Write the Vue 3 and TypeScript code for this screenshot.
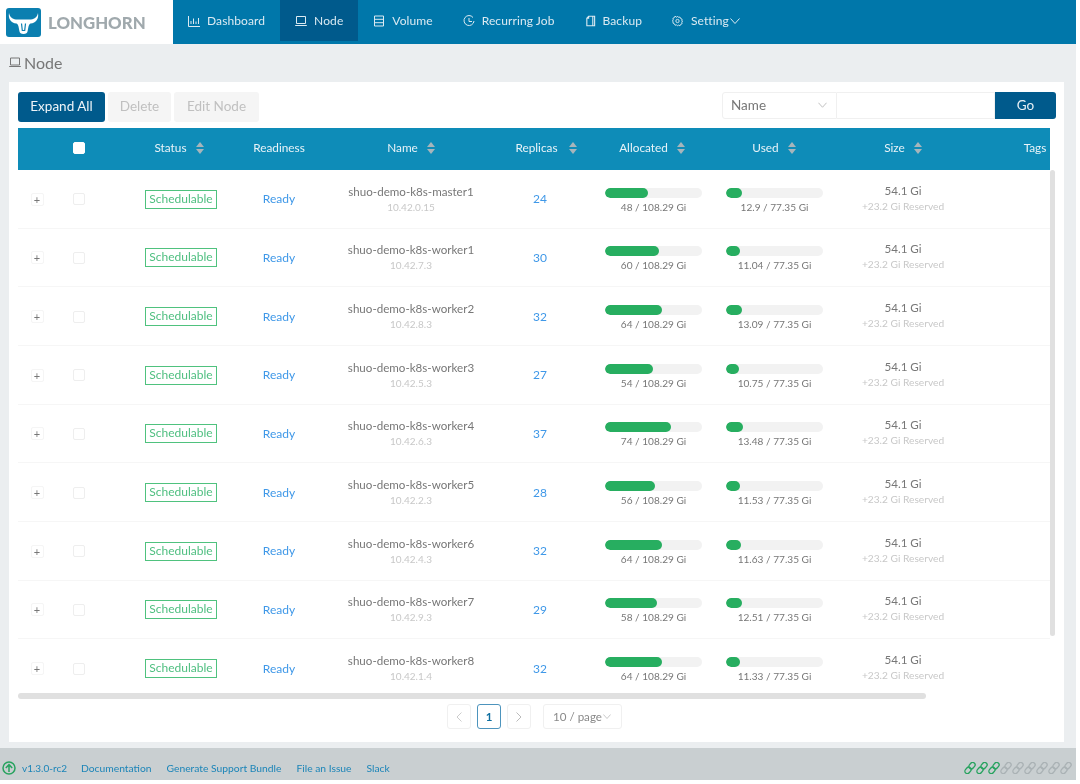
<script setup lang="ts">
interface NodeRow { name: string; ip: string; replicas: number; allocated: number; used: number }

const rows: NodeRow[] = [
  { name: 'shuo-demo-k8s-master1', ip: '10.42.0.15', replicas: 24, allocated: 48, used: 12.9 },
  { name: 'shuo-demo-k8s-worker1', ip: '10.42.7.3', replicas: 30, allocated: 60, used: 11.04 },
  { name: 'shuo-demo-k8s-worker2', ip: '10.42.8.3', replicas: 32, allocated: 64, used: 13.09 },
  { name: 'shuo-demo-k8s-worker3', ip: '10.42.5.3', replicas: 27, allocated: 54, used: 10.75 },
  { name: 'shuo-demo-k8s-worker4', ip: '10.42.6.3', replicas: 37, allocated: 74, used: 13.48 },
  { name: 'shuo-demo-k8s-worker5', ip: '10.42.2.3', replicas: 28, allocated: 56, used: 11.53 },
  { name: 'shuo-demo-k8s-worker6', ip: '10.42.4.3', replicas: 32, allocated: 64, used: 11.63 },
  { name: 'shuo-demo-k8s-worker7', ip: '10.42.9.3', replicas: 29, allocated: 58, used: 12.51 },
  { name: 'shuo-demo-k8s-worker8', ip: '10.42.1.4', replicas: 32, allocated: 64, used: 11.33 },
]

const pct = (v: number, total: number): string => `${(v / total) * 100}%`
const links: boolean[] = [true, true, true, false, false, false, false, false, false]
const footerLinks: string[] = ['Documentation', 'Generate Support Bundle', 'File an Issue', 'Slack']
</script>

<template>
  <div class="app">
    <header class="topbar">
      <div class="brand">
        <svg class="logo" viewBox="0 0 35 29" width="35" height="29">
          <rect width="35" height="29" rx="3" fill="#0b7fb0" />
          <path d="M3 5c1 4 3 6 7 6.500h15c4-.5 6-2.500 7-6.500 1 6-2 10-7.500 10.500-.5 0-1.500 1-2 3l-1 5c-.3 1.500-1.500 2.500-4 2.500s-3.700-1-4-2.500l-1-5c-.5-2-1.500-3-2-3C5 15 2 11 3 5z" fill="#fff" />
          <path d="M15.500 15.500l.8 7h2.400l.8-7" fill="none" stroke="#0b7fb0" stroke-width="1.200" />
        </svg>
        <span class="brand-name">LONGHORN</span>
      </div>
      <nav class="nav">
        <a class="nav-item">
          <svg viewBox="0 0 12 12" width="12" height="12" fill="none" stroke="currentColor"><path d="M.5 1v10.500H12M3 9V6M5.500 9V3.500M8 9V6.500M10.500 9V3" /></svg>
          <span>Dashboard</span>
        </a>
        <a class="nav-item active">
          <svg viewBox="0 0 12 12" width="12" height="12" fill="none" stroke="currentColor"><path d="M1.500 1.500h9v7h-9zM.2 10.500h11.600" /></svg>
          <span>Node</span>
        </a>
        <a class="nav-item">
          <svg viewBox="0 0 12 12" width="12" height="12" fill="none" stroke="currentColor"><path d="M1.500 1h9v10h-9zM1.500 4.300h9M1.500 7.700h9" /></svg>
          <span>Volume</span>
        </a>
        <a class="nav-item">
          <svg viewBox="0 0 12 12" width="12" height="12" fill="none" stroke="currentColor"><path d="M10 2.500A5 5 0 1 0 11 6M6 3v3.500h3" /></svg>
          <span>Recurring Job</span>
        </a>
        <a class="nav-item">
          <svg viewBox="0 0 12 12" width="11" height="12" fill="none" stroke="currentColor" stroke-width="1.200"><path d="M4 .8h6.500v10.400H2V3zM4 .8V3H2M8.500 .8v10.400" /></svg>
          <span>Backup</span>
        </a>
        <a class="nav-item setting">
          <svg viewBox="0 0 12 12" width="11" height="12" fill="none" stroke="currentColor"><circle cx="6" cy="6" r="1.800" /><path d="M6 .7l1 1.300 1.700-.3.700 1.600 1.600.7-.3 1.700L11.500 6l-.8 1.300.3 1.700-1.600.7-.7 1.600L7 10.300 6 11.300l-1-1-1.700.3-.7-1.600L1 8.300l.3-1.300L.5 6l.8-1.300L1 3l1.600-.7.7-1.600L5 2z" /></svg>
          <span>Setting</span>
          <svg class="chev" viewBox="0 0 10 6" width="10" height="6" fill="none" stroke="currentColor"><path d="M.5.500L5 5.500 9.500.500" /></svg>
        </a>
      </nav>
    </header>

    <main class="page">
      <h1 class="title">
        <svg viewBox="0 0 12 12" width="12" height="12" fill="none" stroke="#777"><path d="M1.500 2h9v7h-9zM.2 10.500h11.600" /></svg>
        <span>Node</span>
      </h1>

      <section class="card">
        <div class="toolbar">
          <div class="actions">
            <button class="btn primary">Expand All</button>
            <button class="btn disabled">Delete</button>
            <button class="btn disabled edit">Edit Node</button>
          </div>
          <div class="search">
            <div class="search-select">
              <span>Name</span>
              <svg viewBox="0 0 10 6" width="9" height="6" fill="none" stroke="#bbb"><path d="M.5.500L5 5.500 9.500.500" /></svg>
            </div>
            <div class="search-input"></div>
            <button class="go">Go</button>
          </div>
        </div>

        <div class="table-wrap">
          <div class="table">
            <div class="grid head">
              <span></span>
              <span class="check-cell"><i class="check white"></i></span>
              <span class="h-cell h-status">Status<i class="sort"></i></span>
              <span class="h-cell">Readiness</span>
              <span class="h-cell">Name<i class="sort"></i></span>
              <span class="h-cell h-replicas">Replicas<i class="sort"></i></span>
              <span class="h-cell h-alloc">Allocated<i class="sort"></i></span>
              <span class="h-cell">Used<i class="sort"></i></span>
              <span class="h-cell">Size<i class="sort"></i></span>
              <span class="h-cell">Tags</span>
            </div>
            <div class="body">
              <div v-for="row in rows" :key="row.name" class="grid row">
                <span class="plus-cell"><i class="plus">+</i></span>
                <span class="check-cell"><i class="check"></i></span>
                <span class="cell"><em class="tag">Schedulable</em></span>
                <span class="cell link">Ready</span>
                <div class="stack node-name">
                  <span class="name">{{ row.name }}</span>
                  <span class="sub">{{ row.ip }}</span>
                </div>
                <span class="cell link">{{ row.replicas }}</span>
                <div class="meter alloc">
                  <div class="track"><div class="fill" :style="{ width: pct(row.allocated, 108.29) }"></div></div>
                  <span class="meter-text">{{ row.allocated }} / 108.29 Gi</span>
                </div>
                <div class="meter used">
                  <div class="track"><div class="fill" :style="{ width: pct(row.used, 77.35) }"></div></div>
                  <span class="meter-text">{{ row.used }} / 77.35 Gi</span>
                </div>
                <div class="stack">
                  <span class="name">54.1 Gi</span>
                  <span class="sub">+23.2 Gi Reserved</span>
                </div>
                <span></span>
              </div>
            </div>
          </div>
          <div class="v-thumb"></div>
        </div>

        <div class="h-thumb"></div>

        <div class="pager">
          <span class="page-btn">
            <svg viewBox="0 0 6 10" width="6" height="10" fill="none" stroke="#ccc"><path d="M5.500.500L1 5l4.500 4.500" /></svg>
          </span>
          <span class="page-btn current">1</span>
          <span class="page-btn">
            <svg viewBox="0 0 6 10" width="6" height="10" fill="none" stroke="#bbb"><path d="M.5.500L5 5 .5 9.500" /></svg>
          </span>
          <span class="page-size">
            10 / page
            <svg viewBox="0 0 10 6" width="8" height="5" fill="none" stroke="#bbb"><path d="M.5.500L5 5.500 9.500.500" /></svg>
          </span>
        </div>
      </section>
    </main>

    <footer class="footer">
      <svg class="up" viewBox="0 0 14 14" width="14" height="14" fill="none" stroke="#27a35f" stroke-width="1.500">
        <circle cx="7" cy="7" r="6" />
        <path d="M7 11V4M3.800 7L7 3.700 10.200 7" />
      </svg>
      <a class="version">v1.3.0-rc2</a>
      <a v-for="l in footerLinks" :key="l" class="foot-link">{{ l }}</a>
      <div class="chain">
        <svg v-for="(on, i) in links" :key="i" viewBox="0 0 12 12" width="12" height="12" fill="none" :stroke="on ? '#27a35f' : '#aab2b5'" stroke-width="1.300">
          <rect x="3.600" y="-.6" width="4.800" height="7" rx="2.400" transform="rotate(40 6 6)" />
          <rect x="3.600" y="5.600" width="4.800" height="7" rx="2.400" transform="rotate(40 6 6)" />
        </svg>
      </div>
    </footer>
  </div>
</template>

<style scoped>
.app {
  width: 1076px;
  height: 780px;
  display: flex;
  flex-direction: column;
  background: #ebeef0;
  font-family: Lato, "Open Sans", sans-serif;
  color: #666;
  filter: blur(0.35px);
}
.topbar {
  height: 44px;
  display: flex;
  flex: none;
  background: #0077aa;
}
.brand {
  width: 173px;
  flex: none;
  background: #fff;
  display: flex;
  align-items: center;
  gap: 7px;
  padding-left: 6px;
  box-sizing: border-box;
}
.brand-name {
  font-size: 16.800px;
  font-weight: 900;
  color: #a0a9ad;
}
.nav {
  display: flex;
  align-items: flex-start;
}
.nav-item {
  display: flex;
  align-items: center;
  gap: 7px;
  padding: 0 15px;
  height: 41px;
  box-sizing: border-box;
  font-size: 12px;
  letter-spacing: 0.1px;
  color: #dbeaf2;
}
.nav-item.active {
  background: #005a8c;
}
.setting {
  gap: 8px;
}
.chev {
  margin-left: -7px;
}
.page {
  flex: 1;
  display: flex;
  flex-direction: column;
  min-height: 0;
}
.title {
  margin: 0;
  height: 38px;
  display: flex;
  align-items: center;
  gap: 3px;
  padding: 0 0 2px 9px;
  box-sizing: border-box;
  font-size: 16px;
  font-weight: 400;
  color: #777;
}
.card {
  margin: 0 12px 6px 9px;
  flex: 1;
  background: #fff;
  padding: 10px 0 0 9px;
  display: flex;
  flex-direction: column;
  min-height: 0;
}
.toolbar {
  width: 1038px;
  height: 36px;
  display: flex;
  justify-content: space-between;
  flex: none;
}
.actions {
  display: flex;
  gap: 3px;
}
.btn {
  height: 30px;
  border: 0;
  border-radius: 3px;
  font-family: inherit;
  font-size: 13.500px;
  padding: 0 0 2px;
  width: 63px;
}
.btn.primary {
  width: 87px;
  background: #005a8c;
  color: #eef4f8;
}
.btn.disabled {
  background: #f5f5f5;
  color: #c0c0c0;
}
.btn.edit {
  width: 85px;
}
.search {
  display: flex;
  height: 27px;
}
.search-select {
  width: 115px;
  box-sizing: border-box;
  border: 1px solid #f0f0f0;
  border-radius: 3px 0 0 3px;
  display: flex;
  align-items: center;
  justify-content: space-between;
  padding: 0 9px 2px 8px;
  font-size: 13.500px;
  color: #777;
}
.search-input {
  width: 158px;
  box-sizing: border-box;
  border: 1px solid #f0f0f0;
  border-left: 0;
}
.go {
  width: 61px;
  border: 0;
  border-radius: 0 3px 3px 0;
  background: #005a8c;
  color: #e6eff5;
  font-family: inherit;
  font-size: 13.500px;
  padding: 0 0 2px;
}
.table-wrap {
  position: relative;
  flex: none;
  width: 1038px;
}
.table {
  width: 1032px;
  overflow: hidden;
}
.grid {
  display: grid;
  grid-template-columns: 38px 70px 110px 86px 178px 80px 146px 96px 162px 102px;
  width: 1068px;
}
.head {
  height: 42px;
  padding-bottom: 3px;
  box-sizing: border-box;
  background: #0e8cb8;
  color: #e8f3f8;
  font-size: 11.800px;
  align-items: center;
  text-align: center;
}
.h-cell {
  display: flex;
  align-items: center;
  justify-content: center;
  gap: 9px;
}
.h-status {
  padding-right: 4px;
  box-sizing: border-box;
}
.h-replicas {
  gap: 11px;
  padding-left: 12px;
  box-sizing: border-box;
}
.h-alloc {
  padding-right: 2px;
  box-sizing: border-box;
}
.sort {
  width: 8px;
  height: 12px;
  position: relative;
  display: block;
}
.sort::before,
.sort::after {
  content: "";
  position: absolute;
  left: 0;
  border-left: 4px solid transparent;
  border-right: 4px solid transparent;
}
.sort::before {
  top: 0;
  border-bottom: 5px solid #a7b5bb;
}
.sort::after {
  bottom: 0;
  border-top: 5px solid #a7b5bb;
}
.check-cell {
  padding-left: 17px;
  display: flex;
  align-items: center;
}
.check {
  display: block;
  width: 12px;
  height: 12px;
  box-sizing: border-box;
  border: 1px solid #eee;
  border-radius: 2px;
  background: #fff;
}
.row .check {
  margin-top: 1px;
}
.check.white {
  border-color: #fff;
}
.body {
  height: 520px;
  overflow: hidden;
}
.row {
  height: 58.670px;
  box-sizing: border-box;
  border-bottom: 1px solid #f6f6f6;
  align-items: center;
  text-align: center;
  font-size: 12px;
}
.plus-cell {
  display: flex;
  justify-content: center;
}
.plus {
  width: 13px;
  height: 13px;
  margin-top: 1px;
  box-sizing: border-box;
  border: 1px solid #f5f5f5;
  border-radius: 2px;
  color: #777;
  font-style: normal;
  font-size: 11px;
  line-height: 11px;
  text-align: center;
}
.cell {
  display: flex;
  justify-content: center;
}
.tag {
  box-sizing: border-box;
  width: 72px;
  height: 19px;
  margin-top: 1px;
  line-height: 16px;
  border: 1px solid #4fc27e;
  color: #4fbf80;
  font-style: normal;
  font-size: 12px;
}
.link {
  color: #3f98e8;
}
.stack {
  display: flex;
  flex-direction: column;
  align-items: center;
  gap: 2px;
  margin-bottom: 2px;
}
.node-name {
  margin: 0;
}
.name {
  font-size: 11.600px;
  line-height: 14px;
  color: #777;
}
.sub {
  font-size: 10.200px;
  line-height: 12px;
  color: #c8c8c8;
}
.node-name .sub {
  font-size: 10px;
}
.meter {
  display: flex;
  flex-direction: column;
  align-items: flex-start;
  margin-top: 3px;
}
.alloc {
  padding-left: 25px;
}
.track {
  width: 97px;
  height: 10px;
  background: #f2f2f2;
  border-radius: 5px;
  overflow: hidden;
}
.fill {
  height: 100%;
  background: #27ae60;
  border-radius: 5px;
}
.meter-text {
  margin-top: 3px;
  width: 97px;
  font-size: 10.100px;
  line-height: 12px;
  text-align: center;
  color: #777;
}
.v-thumb {
  position: absolute;
  left: 1032px;
  top: 42px;
  width: 5px;
  height: 466px;
  background: #e0e0e0;
  border-radius: 3px;
}
.h-thumb {
  flex: none;
  margin-top: 3px;
  width: 908px;
  height: 6px;
  background: #e0e0e0;
  border-radius: 3px;
}
.pager {
  flex: none;
  margin: 5px 0 0 429px;
  display: flex;
  align-items: center;
}
.page-btn {
  width: 24px;
  height: 25px;
  box-sizing: border-box;
  border: 1px solid #f0f0f0;
  border-radius: 3px;
  margin-right: 6px;
  display: flex;
  align-items: center;
  justify-content: center;
  font-size: 11.500px;
  font-weight: 700;
}
.page-btn.current {
  border-color: #4d94bd;
  color: #0f6fa0;
}
.page-size {
  margin-left: 6px;
  width: 79px;
  height: 25px;
  box-sizing: border-box;
  border: 1px solid #f0f0f0;
  border-radius: 3px;
  display: flex;
  align-items: center;
  gap: 1px;
  padding-left: 9px;
  font-size: 11.600px;
  color: #8a8a8a;
}
.footer {
  height: 32px;
  flex: none;
  background: #c9cfd1;
  display: flex;
  align-items: center;
  padding: 8px 4px 0 2px;
  box-sizing: border-box;
  font-size: 10.300px;
  color: #1c85b8;
}
.up {
  flex: none;
  margin-right: 6px;
}
.version {
  margin-right: 14px;
  font-size: 10px;
}
.foot-link {
  margin-right: 15px;
}
.chain {
  margin-left: auto;
  display: flex;
  gap: 0;
}
</style>

<style>
html, body {
  background: #fff;
}
</style>
